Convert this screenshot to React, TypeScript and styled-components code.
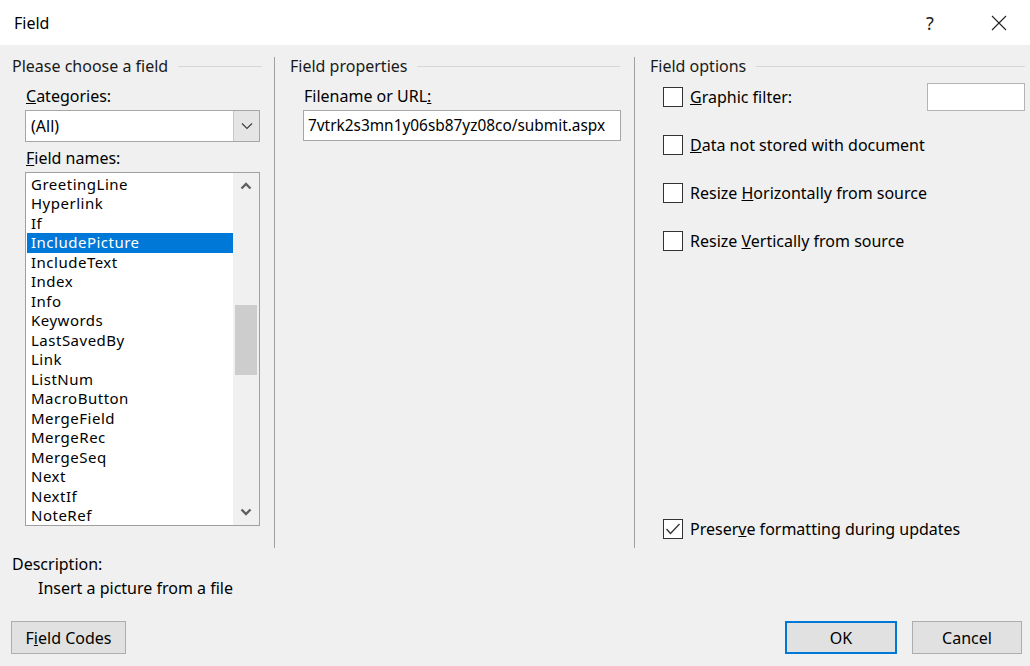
import styled, { createGlobalStyle } from 'styled-components';

const GlobalStyle = createGlobalStyle`
  html, body {
    margin: 0;
    padding: 0;
    background: #f0f0f0;
  }
  body {
    font-family: "Noto Sans", "Open Sans", sans-serif;
    font-size: 16px;
    color: #000;
  }
  * {
    box-sizing: border-box;
  }
`;

const FIELD_NAMES = [
  'GreetingLine',
  'Hyperlink',
  'If',
  'IncludePicture',
  'IncludeText',
  'Index',
  'Info',
  'Keywords',
  'LastSavedBy',
  'Link',
  'ListNum',
  'MacroButton',
  'MergeField',
  'MergeRec',
  'MergeSeq',
  'Next',
  'NextIf',
  'NoteRef',
];

const Window = styled.div`
  width: 1030px;
  height: 666px;
  background: #f0f0f0;
  display: flex;
  flex-direction: column;
  overflow: hidden;
`;

const TitleBar = styled.div`
  height: 45px;
  background: #fff;
  display: flex;
  align-items: center;
  padding-left: 14px;
  flex-shrink: 0;
`;

const Title = styled.div`
  font-size: 16px;
  flex: 1;
`;

const TitleButton = styled.div<{ $gap: number }>`
  width: 46px;
  height: 45px;
  margin-right: ${(p) => p.$gap}px;
  display: flex;
  align-items: center;
  justify-content: center;
  font-size: 18px;
  color: #222;
`;

const Main = styled.div`
  display: flex;
  margin-top: 12px;
  height: 491px;
`;

const Column = styled.div<{ $width?: number; $divider?: boolean; $padLeft: number; $padRight: number }>`
  width: ${(p) => (p.$width ? `${p.$width}px` : 'auto')};
  flex: ${(p) => (p.$width ? '0 0 auto' : '1')};
  border-left: ${(p) => (p.$divider ? '1px solid #a0a0a0' : 'none')};
  padding: 0 ${(p) => p.$padRight}px 0 ${(p) => p.$padLeft}px;
  display: flex;
  flex-direction: column;
`;

const GroupHeader = styled.div`
  display: flex;
  align-items: center;
  height: 18px;
  line-height: 18px;
  color: #1a1a1a;
  white-space: nowrap;

  &::after {
    content: '';
    flex: 1;
    height: 1px;
    background: #d7d7d7;
    margin-left: 10px;
  }
`;

const FieldLabel = styled.div<{ $top: number }>`
  margin-top: ${(p) => p.$top}px;
  margin-left: 14px;
  line-height: 18px;
`;

const Combo = styled.div`
  margin-top: 5px;
  margin-left: 13px;
  width: 235px;
  height: 32px;
  border: 1px solid #a6a6a6;
  background: #fff;
  display: flex;
`;

const ComboText = styled.div`
  flex: 1;
  padding-left: 5px;
  line-height: 30px;
`;

const ComboButton = styled.div`
  width: 26px;
  background: #e5e5e5;
  border-left: 1px solid #c8c8c8;
  display: flex;
  align-items: center;
  justify-content: center;
`;

const ListBox = styled.div`
  margin-top: 5px;
  margin-left: 13px;
  width: 235px;
  height: 354px;
  border: 1px solid #a0a0a0;
  background: #fff;
  display: flex;
`;

const ListItems = styled.div`
  flex: 1;
  padding-top: 1.5px;
  overflow: hidden;
`;

const ListItem = styled.div<{ $selected?: boolean }>`
  height: 19.5px;
  line-height: 19.5px;
  font-size: 15px;
  letter-spacing: 0.5px;
  margin-left: 1px;
  padding-left: 4px;
  background: ${(p) => (p.$selected ? '#0078d7' : 'transparent')};
  color: ${(p) => (p.$selected ? '#fff' : '#000')};
  white-space: nowrap;
`;

const ScrollBar = styled.div`
  width: 26px;
  background: #f0f0f0;
  display: flex;
  flex-direction: column;
  align-items: center;
`;

const ScrollArrow = styled.div`
  height: 26px;
  width: 100%;
  display: flex;
  align-items: center;
  justify-content: center;
`;

const ScrollTrack = styled.div`
  flex: 1;
  width: 100%;
  display: flex;
  justify-content: center;
`;

const ScrollThumb = styled.div<{ $offset: number; $size: number }>`
  margin-top: ${(p) => p.$offset}px;
  width: 22px;
  height: ${(p) => p.$size}px;
  background: #cdcdcd;
`;

const UrlBox = styled.div`
  margin-top: 5px;
  margin-left: 13px;
  width: 318px;
  height: 31px;
  border: 1px solid #a6a6a6;
  background: #fff;
  overflow: hidden;
  white-space: nowrap;
  font-size: 15.4px;
  line-height: 29px;
  padding-left: 4px;
`;

const OptionRow = styled.div<{ $top: number; $bottom?: boolean }>`
  display: flex;
  align-items: center;
  height: 28px;
  margin-top: ${(p) => (p.$bottom ? 'auto' : `${p.$top}px`)};
  margin-bottom: ${(p) => (p.$bottom ? '5px' : '0')};
  padding-left: 13px;
`;

const CheckBox = styled.div`
  width: 20px;
  height: 20px;
  border: 1px solid #333;
  background: #fff;
  display: flex;
  align-items: center;
  justify-content: center;
  flex-shrink: 0;
`;

const OptionLabel = styled.div`
  margin-left: 7px;
  flex: 1;
  white-space: nowrap;
`;

const FilterBox = styled.div`
  width: 98px;
  height: 28px;
  border: 1px solid #b4b4b4;
  background: #fff;
`;

const Description = styled.div`
  margin-top: 7px;
  padding-left: 12px;
  line-height: 18px;
`;

const DescriptionText = styled.div`
  margin-top: 6px;
  padding-left: 38px;
  line-height: 18px;
`;

const ButtonRow = styled.div`
  margin-top: 24px;
  display: flex;
  padding: 0 8px 0 11px;
  gap: 15px;
`;

const Button = styled.div<{ $width: number; $primary?: boolean }>`
  width: ${(p) => p.$width}px;
  height: 33px;
  background: #e1e1e1;
  border: ${(p) => (p.$primary ? '2px solid #0078d7' : '1px solid #adadad')};
  display: flex;
  align-items: center;
  justify-content: center;
`;

const Spacer = styled.div`
  flex: 1;
`;

const ChevronDown = ({ bold }: { bold?: boolean }) => (
  <svg width="12" height="8" viewBox="0 0 12 8">
    <polyline
      points={bold ? '1.5,1.5 6,6 10.5,1.5' : '1,1.5 6,6.5 11,1.5'}
      fill="none"
      stroke={bold ? '#606060' : '#404040'}
      strokeWidth={bold ? 2.4 : 1.2}
    />
  </svg>
);

const ChevronUp = () => (
  <svg width="12" height="8" viewBox="0 0 12 8">
    <polyline points="1.5,6.5 6,2 10.5,6.5" fill="none" stroke="#606060" strokeWidth="2.4" />
  </svg>
);

const CloseIcon = () => (
  <svg width="16" height="16" viewBox="0 0 16 16">
    <path d="M1 1 L15 15 M15 1 L1 15" stroke="#222" strokeWidth="1.1" fill="none" />
  </svg>
);

const CheckMark = () => (
  <svg width="16" height="14" viewBox="0 0 16 14">
    <polyline points="1.5,7 5.5,11.5 14.5,2" fill="none" stroke="#333" strokeWidth="1.3" />
  </svg>
);

export default function App() {
  const selected = 'IncludePicture';
  return (
    <Window>
      <GlobalStyle />
      <TitleBar>
        <Title>Field</Title>
        <TitleButton $gap={23}>?</TitleButton>
        <TitleButton $gap={8}>
          <CloseIcon />
        </TitleButton>
      </TitleBar>

      <Main>
        <Column $width={274} $padLeft={12} $padRight={12}>
          <GroupHeader>Please choose a field</GroupHeader>
          <FieldLabel $top={12}>
            <u>C</u>ategories:
          </FieldLabel>
          <Combo>
            <ComboText>(All)</ComboText>
            <ComboButton>
              <ChevronDown />
            </ComboButton>
          </Combo>
          <FieldLabel $top={7}>
            <u>F</u>ield names:
          </FieldLabel>
          <ListBox>
            <ListItems>
              {FIELD_NAMES.map((name) => (
                <ListItem key={name} $selected={name === selected}>
                  {name}
                </ListItem>
              ))}
            </ListItems>
            <ScrollBar>
              <ScrollArrow>
                <ChevronUp />
              </ScrollArrow>
              <ScrollTrack>
                <ScrollThumb $offset={106} $size={70} />
              </ScrollTrack>
              <ScrollArrow>
                <ChevronDown bold />
              </ScrollArrow>
            </ScrollBar>
          </ListBox>
        </Column>

        <Column $width={360} $divider $padLeft={15} $padRight={14}>
          <GroupHeader>Field properties</GroupHeader>
          <FieldLabel $top={12}>
            Filename or URL<u>:</u>
          </FieldLabel>
          <UrlBox>7vtrk2s3mn1y06sb87yz08co/submit.aspx</UrlBox>
        </Column>

        <Column $divider $padLeft={15} $padRight={5}>
          <GroupHeader>Field options</GroupHeader>
          <OptionRow $top={8}>
            <CheckBox />
            <OptionLabel>
              <u>G</u>raphic filter:
            </OptionLabel>
            <FilterBox />
          </OptionRow>
          <OptionRow $top={20}>
            <CheckBox />
            <OptionLabel>
              <u>D</u>ata not stored with document
            </OptionLabel>
          </OptionRow>
          <OptionRow $top={20}>
            <CheckBox />
            <OptionLabel>
              Resize <u>H</u>orizontally from source
            </OptionLabel>
          </OptionRow>
          <OptionRow $top={20}>
            <CheckBox />
            <OptionLabel>
              Resize <u>V</u>ertically from source
            </OptionLabel>
          </OptionRow>
          <OptionRow $top={0} $bottom>
            <CheckBox>
              <CheckMark />
            </CheckBox>
            <OptionLabel>
              Preser<u>v</u>e formatting during updates
            </OptionLabel>
          </OptionRow>
        </Column>
      </Main>

      <Description>Description:</Description>
      <DescriptionText>Insert a picture from a file</DescriptionText>

      <ButtonRow>
        <Button $width={115}>
          F<u>i</u>eld Codes
        </Button>
        <Spacer />
        <Button $width={112} $primary>
          OK
        </Button>
        <Button $width={110}>Cancel</Button>
      </ButtonRow>
    </Window>
  );
}
